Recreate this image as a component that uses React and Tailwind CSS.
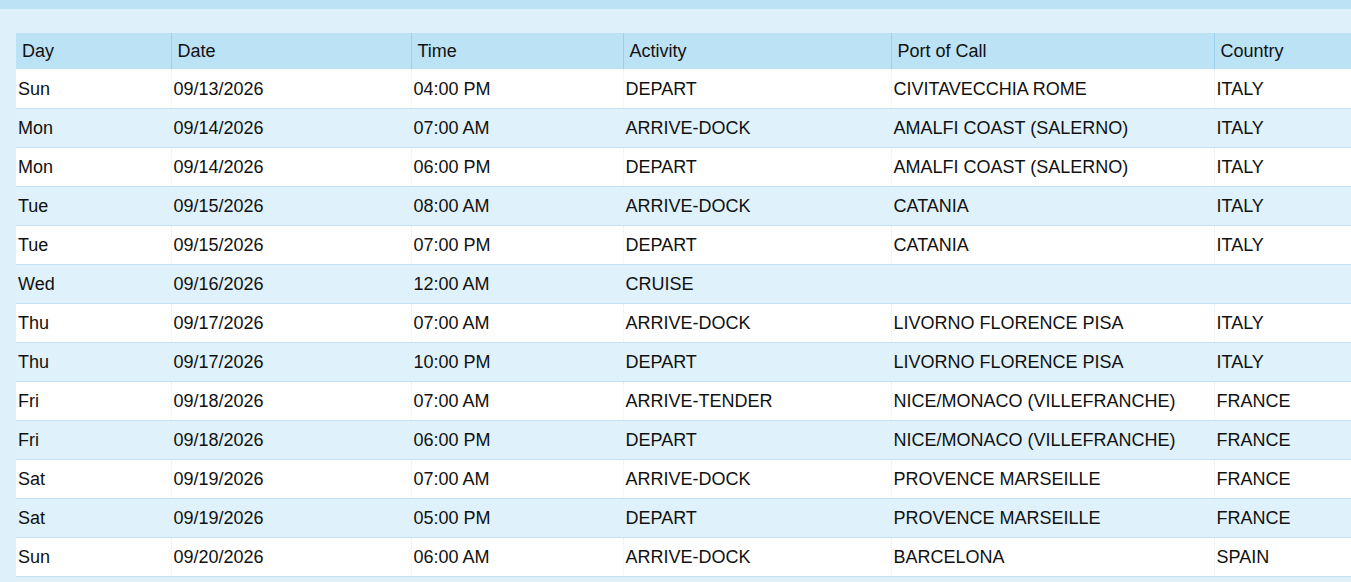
import React from 'react';

const ROWS = [
  ['Sun', '09/13/2026', '04:00 PM', 'DEPART', 'CIVITAVECCHIA ROME', 'ITALY'],
  ['Mon', '09/14/2026', '07:00 AM', 'ARRIVE-DOCK', 'AMALFI COAST (SALERNO)', 'ITALY'],
  ['Mon', '09/14/2026', '06:00 PM', 'DEPART', 'AMALFI COAST (SALERNO)', 'ITALY'],
  ['Tue', '09/15/2026', '08:00 AM', 'ARRIVE-DOCK', 'CATANIA', 'ITALY'],
  ['Tue', '09/15/2026', '07:00 PM', 'DEPART', 'CATANIA', 'ITALY'],
  ['Wed', '09/16/2026', '12:00 AM', 'CRUISE', '', ''],
  ['Thu', '09/17/2026', '07:00 AM', 'ARRIVE-DOCK', 'LIVORNO FLORENCE PISA', 'ITALY'],
  ['Thu', '09/17/2026', '10:00 PM', 'DEPART', 'LIVORNO FLORENCE PISA', 'ITALY'],
  ['Fri', '09/18/2026', '07:00 AM', 'ARRIVE-TENDER', 'NICE/MONACO (VILLEFRANCHE)', 'FRANCE'],
  ['Fri', '09/18/2026', '06:00 PM', 'DEPART', 'NICE/MONACO (VILLEFRANCHE)', 'FRANCE'],
  ['Sat', '09/19/2026', '07:00 AM', 'ARRIVE-DOCK', 'PROVENCE MARSEILLE', 'FRANCE'],
  ['Sat', '09/19/2026', '05:00 PM', 'DEPART', 'PROVENCE MARSEILLE', 'FRANCE'],
  ['Sun', '09/20/2026', '06:00 AM', 'ARRIVE-DOCK', 'BARCELONA', 'SPAIN'],
];

const HEADERS = ['Day', 'Date', 'Time', 'Activity', 'Port of Call', 'Country'];
const WIDTHS = ['w-[155px]', 'w-[240px]', 'w-[212px]', 'w-[268px]', 'w-[323px]', 'w-[160px]'];

export default function App() {
  return (
    <div className="min-h-screen bg-[#def1fb] font-['Liberation_Sans',Arial,sans-serif] text-[#111] overflow-hidden">
      <div className="h-[9px] bg-[#bce2f5]" />
      <div className="pl-4 pt-6 overflow-hidden">
        <table className="border-collapse table-fixed w-[1358px] text-[18px] leading-none">
          <thead>
            <tr className="bg-[#bce2f5] h-[36px]">
              {HEADERS.map((h, i) => (
                <th
                  key={h}
                  className={`${WIDTHS[i]} text-left font-normal pl-[6px] ${i > 0 ? 'border-l border-[#9fcfe9]' : ''}`}
                >
                  {h}
                </th>
              ))}
            </tr>
          </thead>
          <tbody>
            {ROWS.map((r, ri) => (
              <tr
                key={ri}
                className={`h-[39px] border-b border-[#c3e2f3] ${ri % 2 === 0 ? 'bg-white' : 'bg-[#dff1fb]'}`}
              >
                {r.map((c, ci) => (
                  <td
                    key={ci}
                    className={`pl-[2px] pt-[1px] whitespace-nowrap ${ci > 0 ? 'border-l border-dotted border-[#e3eef5] pl-[2px]' : ''}`}
                  >
                    {c}
                  </td>
                ))}
              </tr>
            ))}
          </tbody>
        </table>
      </div>
    </div>
  );
}
